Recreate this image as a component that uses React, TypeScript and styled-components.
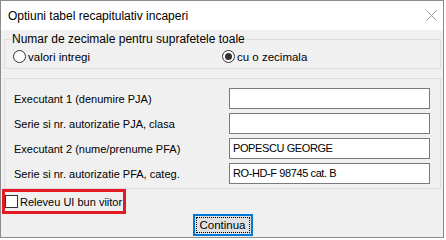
import { Fragment } from "react";
import styled, { createGlobalStyle } from "styled-components";

const GlobalStyle = createGlobalStyle`
  body {
    margin: 0;
    background: #fff;
    font-family: "Liberation Sans", Arial, sans-serif;
    font-size: 11px;
    color: #000;
  }
`;

const Window = styled.div`
  box-sizing: border-box;
  width: 444px;
  height: 238px;
  border: 1px solid #8c8c8c;
  display: flex;
  flex-direction: column;
`;

const TitleBar = styled.div`
  height: 29px;
  background: #fff;
  display: flex;
  align-items: center;
  justify-content: space-between;
  padding: 0 6px 0 7px;
  font-size: 12px;
`;

const Body = styled.div`
  flex: 1;
  background: #f0f0f0;
  padding: 2px 2px 0 3px;
  display: flex;
  flex-direction: column;
`;

const GroupBox = styled.fieldset`
  margin: 0;
  border: 1px solid #dcdcdc;
  padding: 0 8px 3px;
  min-width: 0;
`;

const Legend = styled.legend`
  padding: 0 1px;
  margin-left: -2px;
  line-height: 14px;
  font-size: 12px;
`;

const RadioRow = styled.div`
  margin-top: 2px;
  height: 17px;
  display: grid;
  grid-template-columns: 209px 1fr;
  align-items: center;
  font-size: 11.5px;
`;

const RadioOption = styled.label`
  display: flex;
  align-items: center;
  gap: 2px;
`;

const RadioDot = styled.span<{ $checked?: boolean }>`
  box-sizing: border-box;
  width: 13px;
  height: 13px;
  border-radius: 50%;
  border: 1px solid #333;
  background: #fff;
  display: flex;
  align-items: center;
  justify-content: center;
  &::after {
    content: "";
    width: 7px;
    height: 7px;
    border-radius: 50%;
    background: ${(p) => (p.$checked ? "#333" : "transparent")};
  }
`;

const Panel = styled.div`
  margin-top: 9px;
  border: 1px solid #dcdcdc;
  padding: 9px 10px 4px 9px;
  display: grid;
  grid-template-columns: 1fr 201px;
  grid-auto-rows: 21px;
  row-gap: 4px;
  align-items: center;
`;

const FieldLabel = styled.span`
  white-space: nowrap;
`;

const TextBox = styled.div`
  box-sizing: border-box;
  height: 21px;
  border: 1px solid #7a7a7a;
  background: #fff;
  padding: 0 3px 2px;
  display: flex;
  align-items: center;
  letter-spacing: -0.4px;
  white-space: nowrap;
`;

const Highlight = styled.div`
  box-sizing: border-box;
  margin-left: -2px;
  width: 124px;
  height: 25px;
  border: 3px solid #e51b24;
  display: flex;
  align-items: center;
  white-space: nowrap;
  font-size: 11px;
`;

const CheckBox = styled.span`
  box-sizing: border-box;
  flex: none;
  width: 13px;
  height: 13px;
  border: 1px solid #333;
  background: #fff;
  margin-right: 2px;
`;

const ButtonRow = styled.div`
  display: flex;
  justify-content: center;
`;

const Button = styled.button`
  box-sizing: border-box;
  width: 60px;
  height: 22px;
  border: 2px solid #0078d7;
  background: #e1e1e1;
  padding: 1px;
  font: inherit;
  font-size: 11.5px;
  color: #000;
  display: flex;
`;

const FocusRect = styled.span`
  flex: 1;
  border: 1px dotted #000;
  display: flex;
  align-items: center;
  justify-content: center;
`;

const fields = [
  { label: "Executant 1 (denumire PJA)", value: "" },
  { label: "Serie si nr. autorizatie PJA, clasa", value: "" },
  { label: "Executant 2 (nume/prenume PFA)", value: "POPESCU GEORGE" },
  { label: "Serie si nr. autorizatie PFA, categ.", value: "RO-HD-F 98745 cat. B" },
];

function App() {
  return (
    <>
      <GlobalStyle />
      <Window>
        <TitleBar>
          <span>Optiuni tabel recapitulativ incaperi</span>
          <svg width="11" height="11" viewBox="0 0 11 11">
            <path d="M0.5 0.5 L10.5 10.5 M10.5 0.5 L0.5 10.5" stroke="#9a9a9a" strokeWidth="1" />
          </svg>
        </TitleBar>
        <Body>
          <GroupBox>
            <Legend>Numar de zecimale pentru suprafetele toale</Legend>
            <RadioRow>
              <RadioOption>
                <RadioDot />
                valori intregi
              </RadioOption>
              <RadioOption>
                <RadioDot $checked />
                cu o zecimala
              </RadioOption>
            </RadioRow>
          </GroupBox>
          <Panel>
            {fields.map((f) => (
              <Fragment key={f.label}>
                <FieldLabel>{f.label}</FieldLabel>
                <TextBox>{f.value}</TextBox>
              </Fragment>
            ))}
          </Panel>
          <Highlight>
            <CheckBox />
            Releveu UI bun viitor
          </Highlight>
          <ButtonRow>
            <Button>
              <FocusRect>Continua</FocusRect>
            </Button>
          </ButtonRow>
        </Body>
      </Window>
    </>
  );
}

export default App;
